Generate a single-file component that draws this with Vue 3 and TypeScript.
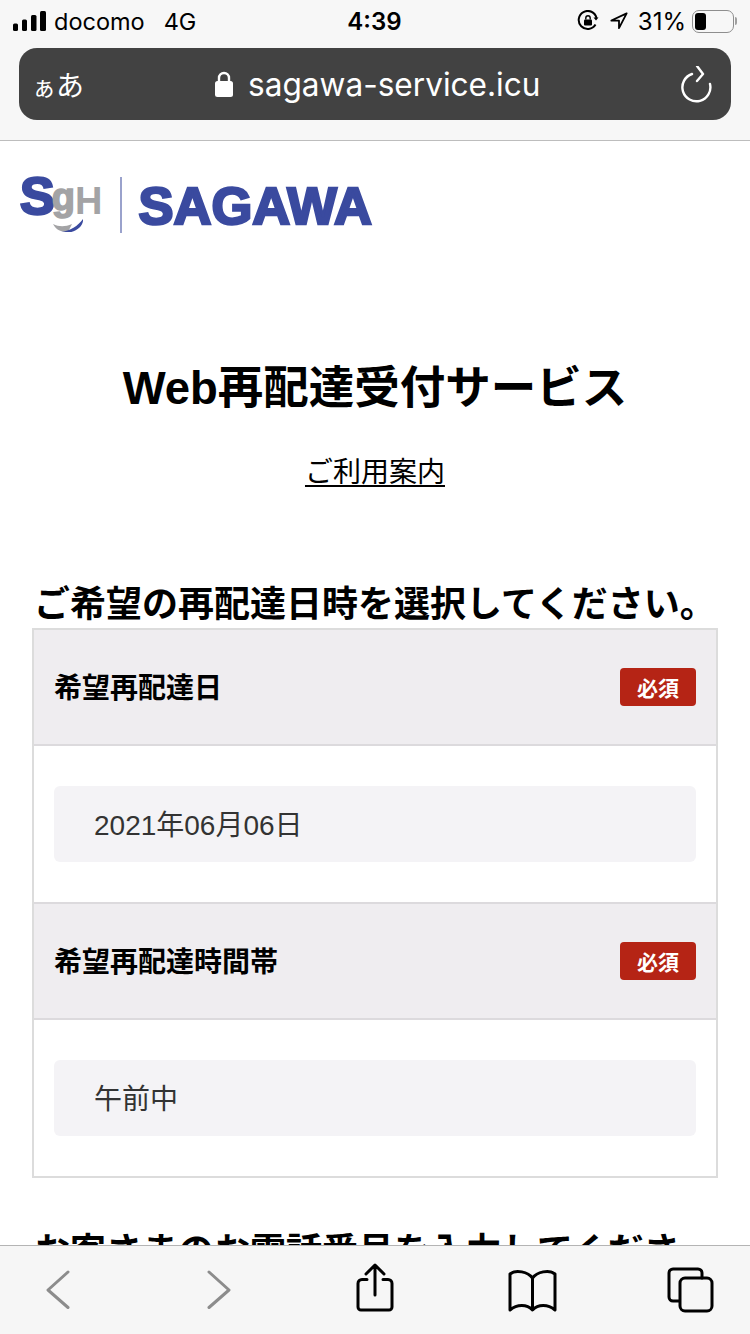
<script setup lang="ts">
interface Section { label: string; value: string }
const sections: Section[] = [
  { label: '希望再配達日', value: '2021年06月06日' },
  { label: '希望再配達時間帯', value: '午前中' },
]
</script>

<template>
  <div class="phone">
    <header class="chrome">
      <div class="status">
        <div class="status-left">
          <svg class="signal" width="33" height="20" viewBox="0 0 33 20" fill="#000">
            <rect x="0" y="12.5" width="5" height="7.5" rx="1.5" />
            <rect x="9" y="8.5" width="5" height="11.5" rx="1.5" />
            <rect x="18" y="4" width="5.5" height="16" rx="1.5" />
            <rect x="27" y="0" width="6" height="20" rx="1.5" />
          </svg>
          <span class="carrier">docomo</span>
          <span class="net">4G</span>
        </div>
        <div class="time">4:39</div>
        <div class="status-right">
          <svg width="22" height="22" viewBox="0 0 22 22" fill="none" stroke="#000" stroke-width="2">
            <path d="M18.5 14.5A9 9 0 1 1 19.5 8" />
            <path d="M21.5 7.5l-2.5 3-2.5-3z" fill="#000" stroke="none" />
            <rect x="7" y="9.5" width="8" height="6" rx="1" fill="#000" stroke="none" />
            <path d="M8.8 9.5V8a2.2 2.2 0 0 1 4.4 0v1.5" stroke-width="1.4" />
          </svg>
          <svg class="loc" width="18" height="20" viewBox="0 0 20 20" fill="none" stroke="#000" stroke-width="2" stroke-linejoin="round">
            <path d="M18.5 1.5L1.5 9.5h8.5v8.5z" />
          </svg>
          <span class="pct">31%</span>
          <div class="battery"><div class="level"></div></div>
          <div class="nub"></div>
        </div>
      </div>
      <div class="urlbar">
        <span class="aa"><small>ぁ</small>あ</span>
        <div class="address">
          <svg width="18" height="26" viewBox="0 0 18 26" fill="#fff">
            <path d="M4 11V7a5 5 0 0 1 10 0v4" fill="none" stroke="#fff" stroke-width="2.4" />
            <rect x="0" y="10" width="18" height="16" rx="2.5" />
          </svg>
          <span>sagawa-service.icu</span>
        </div>
        <svg class="reload" width="32" height="38" viewBox="0 0 32 38" fill="none" stroke="#fff" stroke-width="2.4" stroke-linecap="round" stroke-linejoin="round">
          <path d="M11 8A14 14 0 1 0 29 18" />
          <path d="M16 0l6 8-6 7" />
        </svg>
      </div>
    </header>

    <main class="page">
      <div class="logo">
        <div class="sgh">
          <span class="s">S</span><span class="g">g</span><span class="h">H</span>
          <svg class="swoosh" width="30" height="13" viewBox="0 0 30 13">
            <path d="M0 5c6 3 12 3 19 0l-4 8C8 13 3 11 0 5z" fill="#a3a3a5" />
            <path d="M8 13c9-1 17-6 22-13 1 8-10 16-22 13z" fill="#3a4a9f" />
          </svg>
        </div>
        <div class="divider"></div>
        <span class="brand">SAGAWA</span>
      </div>

      <h1 class="title">Web再配達受付サービス</h1>
      <a class="guide">ご利用案内</a>

      <h2 class="heading first">ご希望の再配達日時を選択してください。</h2>
      <section class="card">
        <template v-for="s in sections" :key="s.label">
          <div class="row-head">
            <span class="label">{{ s.label }}</span>
            <em class="badge">必須</em>
          </div>
          <div class="row-body">
            <div class="field">{{ s.value }}</div>
          </div>
        </template>
      </section>

      <h2 class="heading next">お客さまのお電話番号を入力してください。</h2>
    </main>

    <footer class="toolbar">
      <svg class="ic" viewBox="0 0 48 48" fill="none" stroke="#8c8c8c" stroke-width="3" stroke-linecap="round" stroke-linejoin="round">
        <path d="M34 6L14 24l20 17.5" />
      </svg>
      <svg class="ic" viewBox="0 0 48 48" fill="none" stroke="#8c8c8c" stroke-width="3" stroke-linecap="round" stroke-linejoin="round">
        <path d="M17 6l20 18-20 17.5" />
      </svg>
      <svg class="ic" viewBox="0 0 48 48" fill="none" stroke="#000" stroke-width="3" stroke-linecap="round" stroke-linejoin="round">
        <path d="M17 13.5h-5a4 4 0 0 0-4 4V41a3 3 0 0 0 3 3h28a3 3 0 0 0 3-3V17.5a4 4 0 0 0-4-4h-5" />
        <path d="M25 29V0M16 8l9-9 9 9" />
      </svg>
      <svg class="ic" viewBox="0 0 48 48" fill="none" stroke="#000" stroke-width="3" stroke-linecap="round" stroke-linejoin="round">
        <path d="M24.5 12C20 6 8 3 2 8V44C9 38 19 38 24.5 44 30 38 40 38 47 44V8C41 3 29 6 24.5 12ZM24.5 12V42" />
      </svg>
      <svg class="ic" viewBox="0 0 48 48" fill="none" stroke="#000" stroke-width="3" stroke-linecap="round" stroke-linejoin="round">
        <path d="M13 35H7a4 4 0 0 1-4-4V7a4 4 0 0 1 4-4h25a4 4 0 0 1 4 4v5" />
        <rect x="14" y="12" width="32" height="33" rx="5" />
      </svg>
    </footer>
  </div>
</template>

<style scoped>
.phone {
  width: 750px;
  height: 1334px;
  display: flex;
  flex-direction: column;
  overflow: hidden;
  background: #fff;
  color: #000;
  font-family: "Liberation Sans", "Noto Sans CJK JP", sans-serif;
}
.chrome {
  flex: none;
  height: 141px;
  box-sizing: border-box;
  background: #f7f7f7;
  border-bottom: 1px solid #bdbdbd;
  padding: 0 19px;
}
.status {
  height: 48px;
  margin: 0 -5px 0 -6px;
  display: grid;
  grid-template-columns: 1fr auto 1fr;
  align-items: center;
  font-family: Inter, "Liberation Sans", sans-serif;
  font-size: 23.5px;
}
.status-left { display: flex; align-items: center; }
.signal { margin-right: 8px; margin-top: -6px; }
.carrier { margin-right: 19px; margin-top: -6px; }
.net { margin-top: -6px; }
.time { font-weight: 600; font-size: 24px; margin-top: -6px; }
.status-right { display: flex; align-items: center; justify-content: flex-end; margin-top: -6px; }
.loc { margin-left: 11px; margin-right: 10px; }
.pct { margin-right: 6px; font-size: 24px; }
.battery {
  width: 42px;
  height: 23px;
  box-sizing: border-box;
  border: 1.5px solid #8e8e8e;
  border-radius: 7px;
  padding: 2px;
}
.level { width: 11px; height: 100%; background: #000; border-radius: 3px; }
.nub { width: 2px; height: 8px; background: #a0a0a0; margin: 0 -1px 0 1px; border-radius: 0 2px 2px 0; }
.urlbar {
  height: 72px;
  background: #424242;
  border-radius: 18px;
  display: flex;
  align-items: center;
  color: #fff;
}
.aa {
  width: 195px;
  padding-left: 13px;
  box-sizing: border-box;
  font-family: "Noto Sans CJK JP", sans-serif;
  font-size: 28px;
  line-height: 1;
  white-space: nowrap;
}
.aa small { font-size: 24px; }
.address {
  display: flex;
  align-items: center;
  gap: 15px;
  font-family: Inter, "Liberation Sans", sans-serif;
  font-size: 31.6px;
  flex: 1;
  padding-left: 1px;
}
.reload { margin-right: 18px; margin-top: 2px; }
.page { flex: 1; min-height: 0; overflow: hidden; }
.logo { display: flex; align-items: flex-start; height: 60px; margin: 35px 0 0 20px; }
.sgh {
  position: relative;
  display: flex;
  align-items: flex-start;
  width: 82px;
  height: 60px;
  font-weight: 700;
}
.s { font-size: 52px; line-height: 40px; color: #3a4a9f; -webkit-text-stroke: 2.5px #3a4a9f; }
.g { font-size: 38px; line-height: 30px; color: #a3a3a5; margin: 6px 0 0 -3px; -webkit-text-stroke: 1.5px #a3a3a5; }
.h { font-size: 38px; line-height: 30px; color: #a3a3a5; margin: 10px 0 0 0; }
.swoosh { position: absolute; left: 33px; top: 43px; }
.divider { width: 1.5px; height: 56px; background: #9aa2cc; margin: 1px 17px 0 18px; }
.brand {
  font-weight: 700;
  font-size: 52.5px;
  line-height: 60px;
  color: #3a4a9f;
  -webkit-text-stroke: 2.5px #3a4a9f;
}
.title { margin: 121px 0 0; text-align: center; font-size: 45.5px; line-height: 64px; font-weight: 700; }
.guide {
  display: block;
  width: fit-content;
  margin: 30px auto 0;
  font-size: 28px;
  line-height: 44px;
  text-decoration: underline;
  text-underline-offset: 3px;
}
.heading { margin: 0 34px; font-size: 36px; line-height: 47px; font-weight: 700; }
.heading.first { margin-top: 86px; white-space: nowrap; }
.card { margin: 0 32px; border: 2px solid #dcdcdc; }
.row-head {
  height: 116px;
  box-sizing: border-box;
  display: flex;
  align-items: center;
  justify-content: space-between;
  padding: 0 20px;
  background: #efedf0;
  border-bottom: 2px solid #dcdadd;
  font-size: 28px;
  font-weight: 700;
}
.label { padding-bottom: 2px; }
.badge {
  width: 76px;
  height: 38px;
  display: flex;
  align-items: center;
  justify-content: center;
  background: #b52415;
  border-radius: 4px;
  color: #fff;
  font-style: normal;
  font-size: 21px;
}
.row-body { padding: 40px 20px; background: #fff; }
.row-body:not(:last-child) { border-bottom: 2px solid #dcdadd; }
.field {
  height: 76px;
  box-sizing: border-box;
  padding: 0 0 3px 40px;
  display: flex;
  align-items: center;
  background: #f4f3f6;
  border-radius: 6px;
  font-size: 28px;
  color: #333;
}
.heading.next { margin-top: 50px; }
.toolbar {
  flex: none;
  height: 89px;
  box-sizing: border-box;
  background: #f6f6f6;
  border-top: 1px solid #b4b4b4;
  display: flex;
  align-items: center;
  justify-content: space-between;
  padding: 0 36px 0 34px;
}
.ic { width: 48px; height: 48px; overflow: visible; }
</style>
